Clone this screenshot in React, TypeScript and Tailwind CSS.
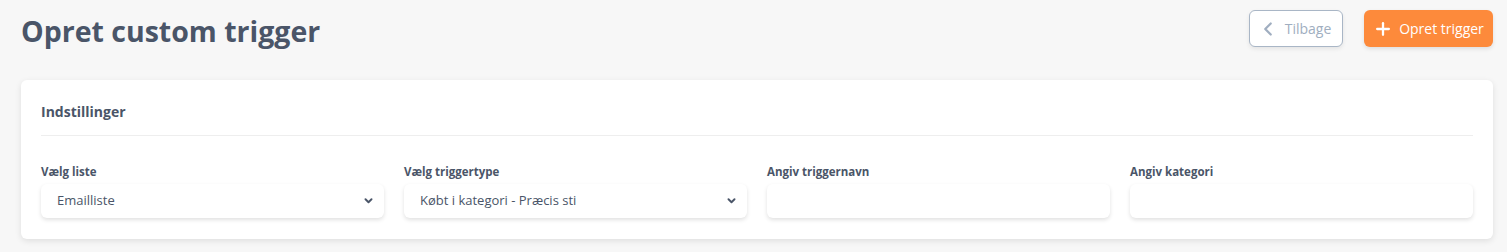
import { ChevronLeft, Plus } from "lucide-react";

const font = { fontFamily: '"Open Sans", "Noto Sans", sans-serif' };

function SelectField({ label, value }: { label: string; value: string }) {
  return (
    <div className="flex flex-col">
      <label className="mb-[4px] text-[11.5px] leading-[16px] font-bold text-[#4a5568]">{label}</label>
      <div className="flex h-[34px] items-center justify-between rounded-[6px] bg-white pl-[16px] pr-[11px] shadow-[0_2px_4px_rgba(0,0,0,0.12)]">
        <span className="text-[13px] text-[#4a5568]">{value}</span>
        <svg width="9" height="6" viewBox="0 0 10 7" fill="none">
          <path d="M1.5 1.5L5 5L8.5 1.5" stroke="#4a5568" strokeWidth="2.2" strokeLinecap="round" strokeLinejoin="round" />
        </svg>
      </div>
    </div>
  );
}

function InputField({ label }: { label: string }) {
  return (
    <div className="flex flex-col">
      <label className="mb-[4px] text-[11.5px] leading-[16px] font-bold text-[#4a5568]">{label}</label>
      <input className="h-[34px] rounded-[6px] bg-white px-[16px] text-[13px] shadow-[0_2px_4px_rgba(0,0,0,0.12)] outline-none" />
    </div>
  );
}

export default function App() {
  return (
    <div className="min-h-[252px] bg-[#f7f7f7] pl-[21px] pr-[14px] pt-[10px]" style={font}>
      <div className="flex items-start justify-between">
        <h1 className="mt-[3px] text-[28.5px] leading-[36px] font-bold text-[#4a5568]">Opret custom trigger</h1>
        <div className="flex gap-[21px]">
          <button className="flex h-[37px] w-[94px] items-center justify-center gap-[6px] rounded-[6px] border border-[#a9b6c6] bg-white text-[14px] text-[#a0aec0] shadow-[0_2px_4px_rgba(0,0,0,0.08)]">
            <ChevronLeft size={22} strokeWidth={2.5} className="-ml-[4px]" />
            Tilbage
          </button>
          <button className="flex h-[37px] w-[129px] items-center justify-center gap-[6px] rounded-[6px] bg-[#fd8a3b] text-[14px] text-white shadow-[0_2px_4px_rgba(0,0,0,0.1)]">
            <Plus size={20} strokeWidth={2.75} />
            Opret trigger
          </button>
        </div>
      </div>

      <div className="mt-[31px] rounded-[6px] bg-white px-[20px] pt-[22px] pb-[21px] shadow-[0_2px_6px_rgba(0,0,0,0.1)]">
        <div className="border-b border-[#eeeeee] pb-[13px] text-[14px] leading-[20px] font-bold text-[#4a5568]">Indstillinger</div>
        <div className="mt-[28px] grid grid-cols-4 gap-[20px]">
          <SelectField label="Vælg liste" value="Emailliste" />
          <SelectField label="Vælg triggertype" value="Købt i kategori - Præcis sti" />
          <InputField label="Angiv triggernavn" />
          <InputField label="Angiv kategori" />
        </div>
      </div>
    </div>
  );
}
